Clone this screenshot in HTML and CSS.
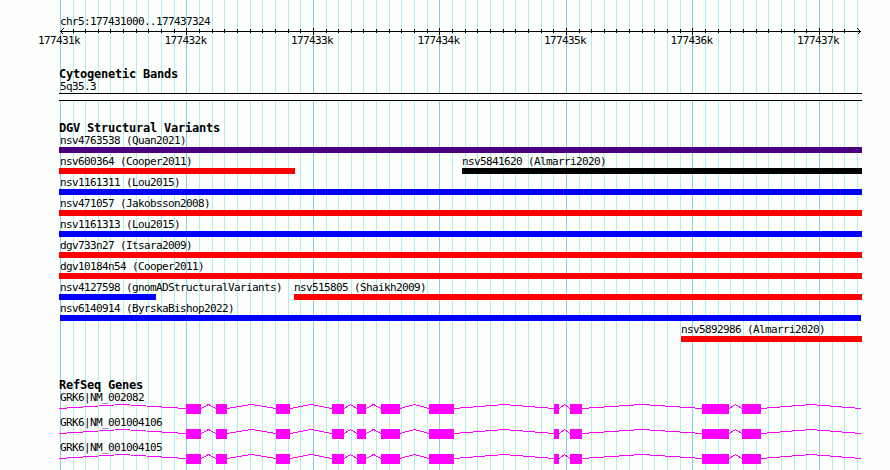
FILE: index.html
```html
<!DOCTYPE html>
<html lang="en">
<head>
  <meta charset="UTF-8">
  <title>chr5:177431000..177437324</title>
  <link rel="stylesheet" href="styles.css">
</head>
<body>

  <!-- Grid lines behind all tracks -->
  <svg class="grid" width="890" height="470">
    <path class="minor" id="grid-minor"/>
    <path class="major" id="grid-major"/>
  </svg>

  <!-- Gene model shared by the transcripts -->
  <svg class="defs" width="0" height="0">
    <symbol id="gene" viewBox="59 0 803 11">
      <path class="intron" d="M59 4.5L122.5 .5L186 4.5M201 4.5L208.5 .5L216 4.5M227 4.5L251.5 .5L276 4.5M290 4.5L311 .5L332 4.5M344 4.5L350.5 .5L357 4.5M366 4.5L373.5 .5L381 4.5M400 4.5L414.5 .5L429 4.5M454 4.5L504 .5L554 4.5M559 4.5L564.5 .5L570 4.5M582 4.5L642 .5L702 4.5M729 4.5L735.5 .5L742 4.5M761 4.5L811 .5L861 4.5"/>
      <path class="exon" d="M186 0h15v10h-15zM216 0h11v10h-11zM276 0h14v10h-14zM332 0h12v10h-12zM357 0h9v10h-9zM381 0h19v10h-19zM429 0h25v10h-25zM554 0h5v10h-5zM570 0h12v10h-12zM702 0h27v10h-27zM742 0h19v10h-19z"/>
    </symbol>
  </svg>

  <main class="tracks">
    <!-- Scale -->
    <section class="scale">
      <div class="label">chr5:177431000..177437324</div>
      <svg class="ruler" width="803" height="9" viewBox="59 27 803 9">
        <path d="M60 31.5H861M63.5 28.5L60.5 31.5L63.5 34.5M857.5 28.5L860.5 31.5L857.5 34.5"/>
        <path id="ticks"/>
      </svg>
      <div class="positions">
        <span>177431k</span><span>177432k</span><span>177433k</span><span>177434k</span><span>177435k</span><span>177436k</span><span>177437k</span>
      </div>
    </section>

    <!-- Cytogenetic bands -->
    <section class="cyto">
      <h2>Cytogenetic Bands</h2>
      <div class="label">5q35.3</div>
      <div class="band"></div>
    </section>

    <!-- Structural variants -->
    <section class="variants">
      <h2>DGV Structural Variants</h2>
      <div class="row"><div class="variant complex">nsv4763538 (Quan2021)</div></div>
      <div class="row">
        <div class="variant loss" style="width: 236px">nsv600364 (Cooper2011)</div>
        <div class="variant other" style="width: 400px">nsv5841620 (Almarri2020)</div>
      </div>
      <div class="row"><div class="variant gain">nsv1161311 (Lou2015)</div></div>
      <div class="row"><div class="variant loss">nsv471057 (Jakobsson2008)</div></div>
      <div class="row"><div class="variant gain">nsv1161313 (Lou2015)</div></div>
      <div class="row"><div class="variant loss">dgv733n27 (Itsara2009)</div></div>
      <div class="row"><div class="variant loss">dgv10184n54 (Cooper2011)</div></div>
      <div class="row">
        <div class="variant gain" style="width: 97px">nsv4127598 (gnomADStructuralVariants)</div>
        <div class="variant loss" style="width: 568px">nsv515805 (Shaikh2009)</div>
      </div>
      <div class="row"><div class="variant gain inner">nsv6140914 (ByrskaBishop2022)</div></div>
      <div class="row end"><div class="variant loss" style="width: 181px">nsv5892986 (Almarri2020)</div></div>
    </section>

    <!-- Genes -->
    <section class="genes">
      <h2>RefSeq Genes</h2>
      <div class="gene">
        <div class="label">GRK6|NM_002082</div>
        <svg width="803" height="11"><use href="#gene"/></svg>
      </div>
      <div class="gene">
        <div class="label">GRK6|NM_001004106</div>
        <svg width="803" height="11"><use href="#gene"/></svg>
      </div>
      <div class="gene">
        <div class="label">GRK6|NM_001004105</div>
        <svg width="803" height="11"><use href="#gene"/></svg>
      </div>
    </section>
  </main>

  <script>
    // one line every 100 bp, a darker one every 1000 bp
    let minor = "";
    let major = "";
    let ticks = "";
    for (let i = 0; i <= 63; i++) {
      const x = Math.floor(60.36 + i * 12.65) + 0.5;
      if (i % 10 === 0) {
        major += `M${x} 0V470`;
        if (i > 0) ticks += `M${x} 28V35`;
      } else {
        minor += `M${x} 0V470`;
        if (i < 63) ticks += `M${x} 29V33`;
      }
    }
    document.getElementById("grid-minor").setAttribute("d", minor);
    document.getElementById("grid-major").setAttribute("d", major);
    document.getElementById("ticks").setAttribute("d", ticks);
  </script>

</body>
</html>
```
FILE: styles.css
```css
body {
  margin: 0;
  height: 470px;
  overflow: hidden;
  background-color: #fdfffc;
  color: #000;
  font: 11px/12px "DejaVu Sans Mono", monospace;
  letter-spacing: -0.622px;
}

svg {
  display: block;
  shape-rendering: crispEdges;
}

/* Grid */
.grid {
  position: absolute;
  z-index: -1;
}

.grid path {
  fill: none;
}

.minor {
  stroke: #afeeee;
}

.major {
  stroke: #87ceeb;
}

.defs {
  position: absolute;
}

.tracks {
  width: 803px;
  padding: 15px 0 0 59px;
}

h2 {
  margin: 0;
  height: 12px;
  font-size: 12px;
  line-height: 12px;
  letter-spacing: -0.224px;
}

.label {
  height: 12px;
  padding: 1px 0 0 1px;
}

/* Scale */
.scale {
  height: 53px;
}

.ruler {
  margin-top: -1px;
}

.ruler path {
  fill: none;
  stroke: #000;
}

.positions {
  display: grid;
  grid-template-columns: repeat(7, 126.5px);
  margin: -1px 0 0 -21px;
}

/* Cytogenetic band */
.cyto {
  height: 54px;
}

.band {
  height: 6px;
  border: solid #000;
  border-width: 1px 0;
  background-color: #fff;
}

/* Variants */
.variants {
  height: 257px;
}

.row {
  display: flex;
  justify-content: space-between;
  height: 21px;
}

.row.end {
  justify-content: flex-end;
}

.variant {
  width: 100%;
  height: 19px;
  padding: 1px 0 0 1px;
  box-sizing: border-box;
  border-bottom: 6px solid;
  white-space: nowrap;
}

.variant + .variant,
.end .variant {
  padding-left: 0;
}

.inner {
  margin: 0 1px;
  padding-left: 0;
}

.complex {
  border-color: #4b0082;
}

.loss {
  border-color: #f00;
}

.gain {
  border-color: #00f;
}

.other {
  border-color: #000;
}

/* Genes */
.gene {
  height: 25px;
}

.intron {
  fill: none;
  stroke: #f0f;
}

.exon {
  fill: #f0f;
}
```
